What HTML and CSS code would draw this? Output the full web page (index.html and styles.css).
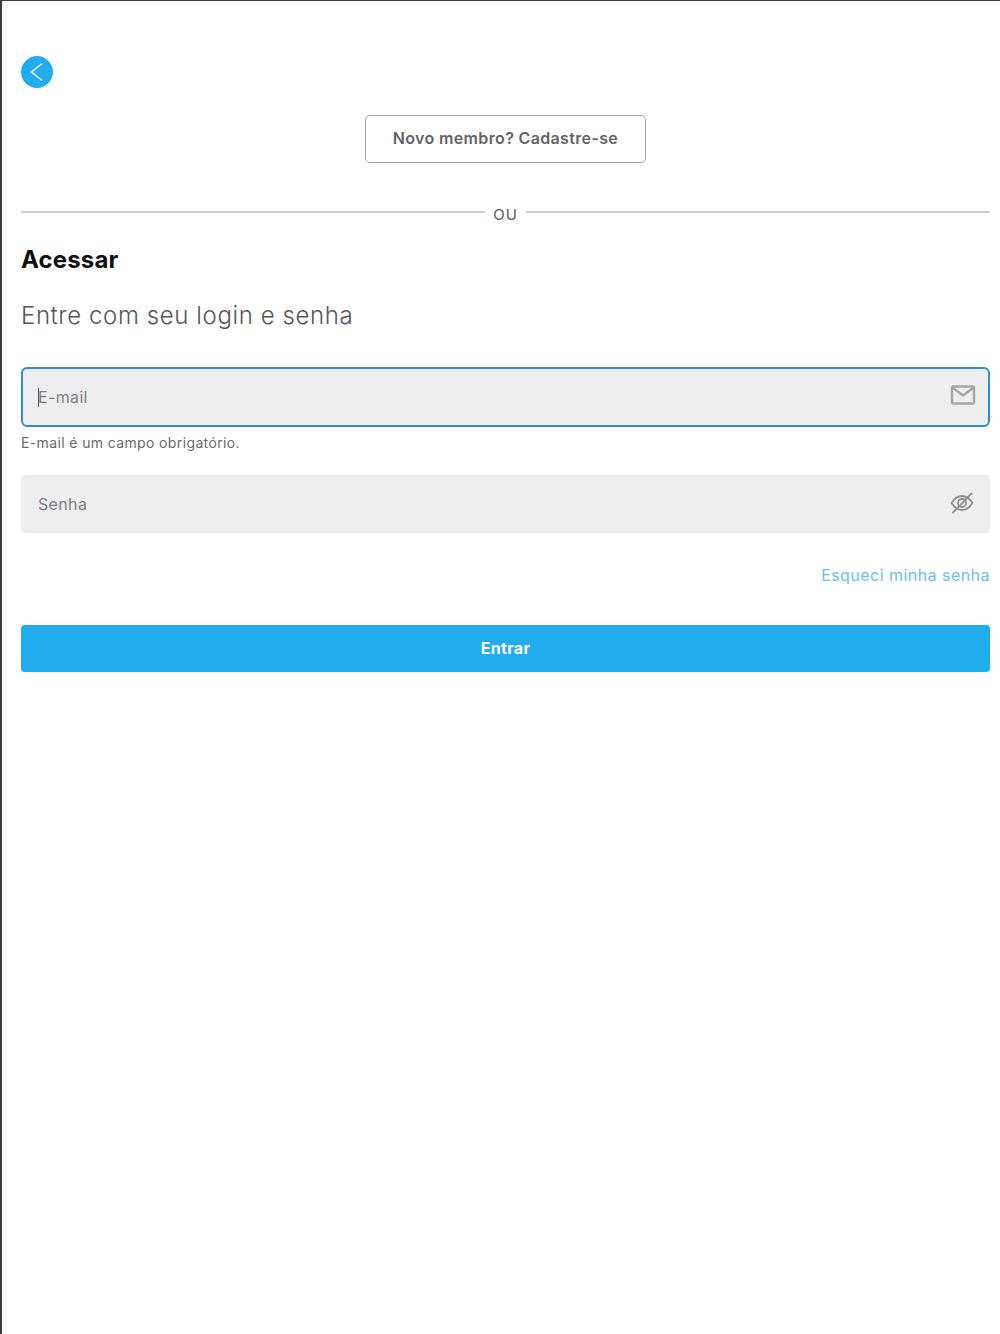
FILE: index.html
```html
<!DOCTYPE html>
<html lang="pt-BR">
<head>
<meta charset="utf-8">
<title>Acessar</title>
<link rel="stylesheet" href="styles.css">
</head>
<body>
<main class="page">
  <button class="back" aria-label="Voltar">
    <svg width="32" height="32" viewBox="0 0 32 32"><path d="M20.500 8 L10.500 16 L20.500 24" fill="none" stroke="#fff" stroke-width="1.600" stroke-linecap="round" stroke-linejoin="round"/></svg>
  </button>
  <div class="signup-row"><a class="signup">Novo membro? Cadastre-se</a></div>
  <div class="divider"><span class="line"></span><span class="ou">OU</span><span class="line"></span></div>
  <h1 class="title">Acessar</h1>
  <p class="subtitle">Entre com seu login e senha</p>
  <div class="field field-focus">
    <span class="caret"></span><span class="placeholder">E-mail</span>
    <svg class="icon icon-mail" width="26" height="22" viewBox="0 0 26 22"><rect x="2" y="2.500" width="22" height="17" rx="1.500" fill="none" stroke="#a5a5a5" stroke-width="2.400"/><path d="M3 4 L13 11.500 L23 4" fill="none" stroke="#a5a5a5" stroke-width="2.200"/></svg>
  </div>
  <p class="helper">E-mail é um campo obrigatório.</p>
  <div class="field">
    <span class="placeholder">Senha</span>
    <svg class="icon icon-eye" width="26" height="22" viewBox="0 0 26 22"><path d="M2.500 11 C6 5.500 9.500 4 13 4 C16.500 4 20 5.500 23.500 11 C20 16.500 16.500 18 13 18 C9.500 18 6 16.500 2.500 11 Z" fill="none" stroke="#8f8f8f" stroke-width="1.800"/><circle cx="13" cy="11" r="4" fill="none" stroke="#8f8f8f" stroke-width="1.800"/><path d="M4 20.500 L22.500 1.500" fill="none" stroke="#8f8f8f" stroke-width="1.800" stroke-linecap="round"/></svg>
  </div>
  <div class="forgot-row"><a class="forgot">Esqueci minha senha</a></div>
  <button class="submit">Entrar</button>
</main>
</body>
</html>
```
FILE: styles.css
```css
* { box-sizing: border-box; }
html, body { margin: 0; height: 100%; background: #fff; }
body { font-family: "Inter", "Open Sans", sans-serif; }
.page {
  min-height: 1334px;
  border-top: 1px solid #3c3c3c;
  border-left: 2px solid #3c3c3c;
  padding: 55px 10px 0 19px;
  display: flex;
  flex-direction: column;
}
.back {
  width: 32px; height: 32px; padding: 0; border: 0; border-radius: 50%;
  background: #21aced; display: block;
}
.back svg { display: block; }
.signup-row { display: flex; justify-content: center; margin-top: 27px; }
.signup {
  width: 281px; height: 48px; padding-bottom: 2px; border: 1.500px solid #a6a6a6; border-radius: 5px;
  display: flex; align-items: center; justify-content: center;
  font-size: 16px; font-weight: 600; color: #636363; letter-spacing: 0.35px;
}
.divider { display: flex; align-items: center; gap: 8px; margin-top: 40px; height: 20px; }
.line { flex: 1; height: 2px; background: #cbcbcb; margin-top: -2px; }
.ou { font-size: 15px; padding-top: 2px; color: #5b5560; letter-spacing: 1px; }
.title { margin: 20px 0 0; font-size: 24px; line-height: 34px; font-weight: 700; color: #111; letter-spacing: 0.15px; }
.subtitle { margin: 22px 0 0; font-size: 24px; line-height: 34px; font-weight: 300; color: #555; letter-spacing: 0.6px; }
.field {
  height: 58px; margin-top: 0; background: #eee; border-radius: 4px;
  display: flex; align-items: center; justify-content: space-between;
  padding: 0 15px 0 17px;
}
.field-focus { height: 60px; margin-top: 34px; border: 2px solid #2f8de0; border-radius: 6px; padding: 0 12px 0 15px; justify-content: flex-start; }
.icon-mail { margin-left: auto; margin-bottom: 5px; }
.icon-eye { margin-bottom: 2px; }
.caret { width: 1px; height: 19px; background: #555; margin-right: -1px; }
.placeholder { font-size: 16px; color: #7d7d85; letter-spacing: 0.35px; }
.helper { margin: 7px 0 23px; font-size: 14px; line-height: 18px; color: #6a6a6a; letter-spacing: 0.37px; }
.forgot-row { display: flex; justify-content: flex-end; margin-top: 31px; }
.forgot { font-size: 16px; line-height: 22px; color: #6cbcf5; letter-spacing: 0.46px; }
.submit {
  margin-top: 39px; height: 47px; width: 100%; padding: 0 0 2px; border: 0; border-radius: 4px;
  background: #21aced; color: #fff; font-family: inherit; font-size: 16px; font-weight: 700; letter-spacing: 0.33px;
}
```
